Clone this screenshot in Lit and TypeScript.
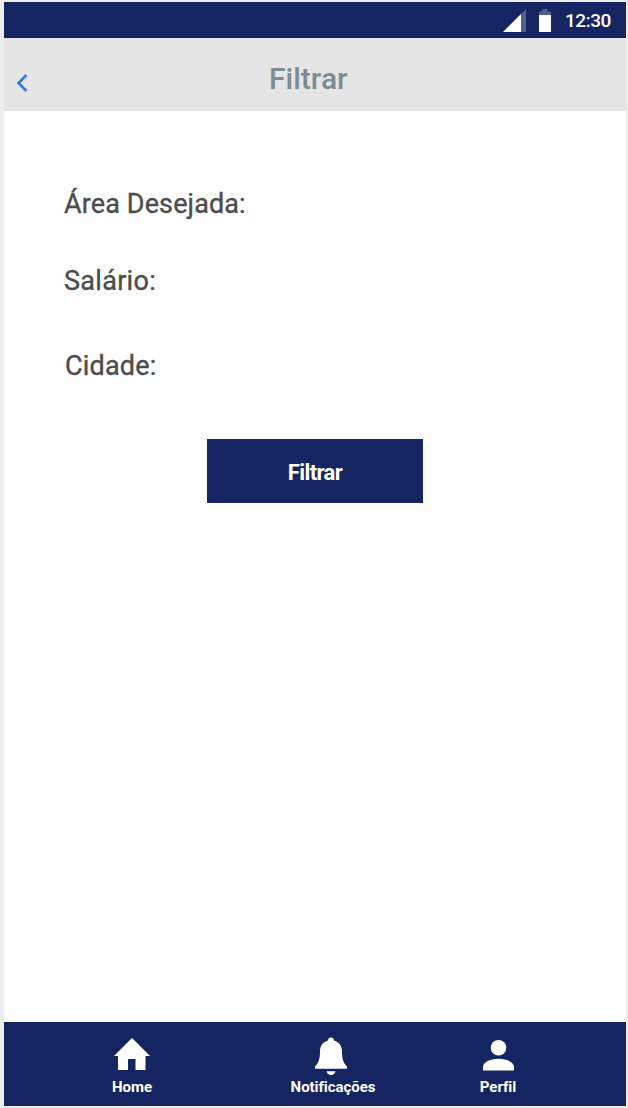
import { LitElement, html, css, svg } from "lit";
import { customElement } from "lit/decorators.js";

const homeIcon = svg`<svg width="36" height="32" viewBox="0 0 36 32"><path d="M18 0 36 18H31.500V32H21.500V21H14V32H4V18H0Z" fill="#fff"/></svg>`;
const bellIcon = svg`<svg width="32" height="38" viewBox="0 0 32 38"><path d="M16 -.5c1.900 0 3 1.200 3 2.900C24.500 4 27 8 27 13.500C27 20 28 24.500 32 28.500V30.700H0V28.500C4 24.500 5 20 5 13.500C5 8 7.500 4 13 2.400C13 .7 14.100-.5 16-.5ZM11.500 33.200H20.500C20 35.600 18.300 37 16 37S12 35.600 11.500 33.200Z" fill="#fff"/></svg>`;
const personIcon = svg`<svg width="31" height="31" viewBox="0 0 31 31"><circle cx="15.500" cy="7.800" r="7.800" fill="#fff"/><path d="M0 30.500V27C0 21.500 8.500 18.700 15.500 18.700S31 21.500 31 27V30.500Z" fill="#fff"/></svg>`;

@customElement("app-root")
export class AppRoot extends LitElement {
  static styles = css`
    :host {
      display: block;
      box-sizing: border-box;
      height: 1108px;
      padding: 2px 2px 2px 4px;
      background: #ededed;
      font-family: Roboto, sans-serif;
    }
    svg { display: block; overflow: visible; }
    .screen {
      display: flex;
      flex-direction: column;
      height: 1104px;
      background: #fefefe;
    }
    .status {
      display: flex;
      justify-content: flex-end;
      align-items: flex-start;
      height: 36px;
      padding: 0 15px 0 0;
      box-sizing: border-box;
      background: #152561;
      color: #fff;
    }
    .signal { margin: 7px 12px 0 0; }
    .battery { margin: 7px 14px 0 0; }
    .time {
      width: 46px;
      font-size: 19px;
      font-weight: 500;
      line-height: 38px;
      letter-spacing: -0.45px;
      white-space: nowrap;
    }
    .header {
      display: grid;
      grid-template-columns: 265px auto 1fr;
      height: 73px;
      background: #e5e5e5;
      color: #7d8b92;
    }
    .back { padding: 36px 0 0 12px; }
    h1 {
      margin: 0;
      padding-top: 23px;
      font-size: 30px;
      font-weight: 500;
      line-height: 36px;
    }
    .form {
      flex: 1;
      display: flex;
      flex-direction: column;
      align-items: flex-start;
      padding: 77px 60px 0;
      color: #4c4c4c;
      font-size: 27px;
      line-height: 32px;
      -webkit-text-stroke: 0.35px #4c4c4c;
    }
    .area { margin-bottom: 45px; letter-spacing: 0.12px; }
    .salary { margin-bottom: 53px; letter-spacing: 0.3px; }
    .city { margin: 0 0 57px 1px; letter-spacing: 0.2px; }
    button {
      width: 216px;
      height: 64px;
      margin-left: 143px;
      padding: 3px 0 0;
      border: 0;
      background: #152561;
      color: #fff;
      font: 700 22px/25px Roboto, sans-serif;
      letter-spacing: -0.6px;
      -webkit-text-stroke: 0;
    }
    nav {
      display: flex;
      height: 84px;
      padding-left: 107px;
      box-sizing: border-box;
      background: #152561;
      color: #fff;
      font-size: 15px;
      font-weight: 700;
      line-height: 18px;
      letter-spacing: -0.05px;
    }
    .item {
      display: flex;
      flex-direction: column;
      align-items: center;
      white-space: nowrap;
    }
    .icon { height: 40px; margin-top: 16px; }
    .home { width: 42px; }
    .alerts { width: 88px; margin-left: 136px; }
    .alerts .icon { margin-right: 5px; }
    .profile { width: 38px; margin-left: 102px; }
    .profile .icon { height: 38px; margin-top: 18px; }
  `;

  render() {
    return html`
      <div class="screen">
        <div class="status">
          <svg class="signal" width="24" height="24" viewBox="0 0 24 24">
            <path d="M23 0V23H0Z" fill="#56608f"/>
            <path d="M18 5V23H0Z" fill="#fff"/>
          </svg>
          <svg class="battery" width="12" height="24" viewBox="0 0 12 24">
            <path d="M0 2.500H3.500V0H8.500V2.500H12V23H0Z" fill="#56608f"/>
            <path d="M0 6H12V23H0Z" fill="#fff"/>
          </svg>
          <span class="time">12:30</span>
        </div>
        <header class="header">
          <div class="back">
            <svg width="12" height="18" viewBox="0 0 12 18">
              <path d="M10.500 1 2.500 9 10.500 17" fill="none" stroke="#2d7de8" stroke-width="2.600"/>
            </svg>
          </div>
          <h1>Filtrar</h1>
        </header>
        <main class="form">
          <span class="area">Área Desejada:</span>
          <span class="salary">Salário:</span>
          <span class="city">Cidade:</span>
          <button>Filtrar</button>
        </main>
        <nav>
          <div class="item home"><div class="icon">${homeIcon}</div><span>Home</span></div>
          <div class="item alerts"><div class="icon">${bellIcon}</div><span>Notificações</span></div>
          <div class="item profile"><div class="icon">${personIcon}</div><span>Perfil</span></div>
        </nav>
      </div>
    `;
  }
}
